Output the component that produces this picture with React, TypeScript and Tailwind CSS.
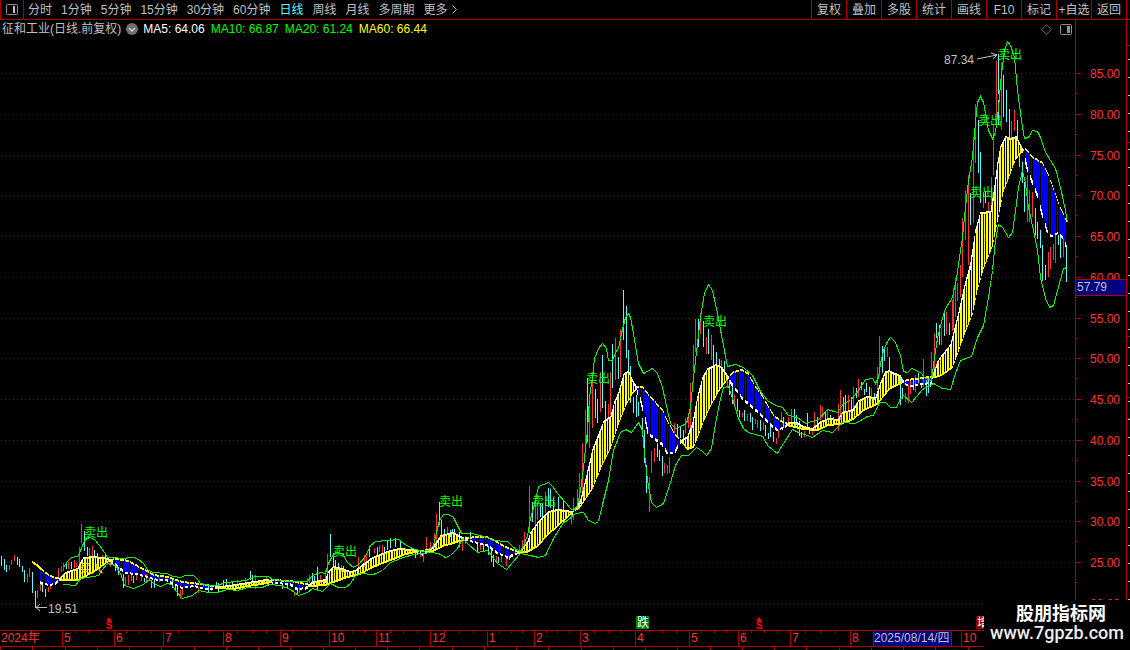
type Point = [number, number]

const parse = (data: string): Point[] =>
  data
    .trim()
    .split(/\s+/)
    .map((pair) => pair.split(',').map(Number) as Point)

const upperBand = parse(`
63,567 67,561 71,557 77,556 79,553 82,545 85,539 89,537 94,539 99,545 104,552 107,557 115,557 120,558 133,557 138,559 143,563 147,569 152,572 167,573 172,576 180,577 185,575 193,575 197,579 200,583 208,585 217,585 225,582 237,581 245,580 255,576 268,576 272,579 280,580 290,581
307,581 312,575 320,572 325,573 328,563 331,557 335,552 342,553 347,562 353,567 358,564 365,556 370,545 375,541 398,539 403,543 412,548 422,551 428,550 433,545 436,532 439,520 443,514 448,514 453,517 457,525 461,533 472,533 487,537 492,540 507,541 513,547 520,551 523,545 527,535 530,518 535,500 538,486 548,482 552,486 557,493 565,502
570,508 573,510 577,505 580,490 583,467 587,430 589,397 592,377 594,358 598,348 602,343 606,348 608,360 612,360 615,352 618,348 621,333 625,317 628,313 630,317 633,333 638,363 643,373 652,368 657,373 662,387 667,410 670,423 675,428 682,425 686,423 690,407 693,377 697,343 700,317 704,293 708,284 712,290 717,313 722,340 727,366 735,364 743,367 752,375
760,391 767,400 775,405 782,407 788,415 797,417 805,423 818,419 827,409 837,412 843,403 850,400 858,390 865,379 872,378 875,383 878,377 880,363 883,350 887,341 890,337 895,342 900,355 903,371 907,372 911,368 920,372 925,378 931,380 934,357 937,338 940,325 945,308 952,297 956,278 959,257 962,237 965,207 968,180
972,157 975,122 977,102 980,96 983,102 985,113 988,130 992,138 995,132 998,107 1001,73 1004,50 1007,41 1010,45 1014,57 1017,90 1021,120 1024,138 1028,137 1032,130 1037,131 1040,137 1045,152 1055,168 1060,187 1065,210 1067,222`)

const lowerBand = parse(`
63,584 75,585 80,578 87,577 98,575 102,569 107,563 115,565 120,573 124,585 133,588 143,584 149,579 153,583 160,586 167,583 171,584 175,590 182,598 192,595 198,590 208,592 217,592 227,589 237,590 247,587 262,587 268,584 280,585 290,589
298,595 307,592 312,588 322,591 330,583 338,587 345,587 350,583 355,575 360,573 373,574 382,570 390,562 400,558 413,554 430,552 438,553 445,557 450,555 457,548 462,538 467,543 477,552 487,550 491,555 497,563 506,569 512,562 520,553 530,555 538,557 545,555 553,538 563,522
567,520 575,513 583,512 588,520 595,523 598,521 603,500 608,480 613,450 620,432 625,429 631,432 638,422 642,430 644,453 647,480 651,502 656,507 663,503 670,482 675,465 681,455 688,455 696,447 702,451 706,455 711,448 715,423 720,398 723,387 728,386 732,398 738,418 743,428 748,432
762,436 768,446 777,453 783,443 792,429 798,432 807,435 812,437 822,430 832,432 842,422 855,423 867,416 873,415 879,402 885,402 890,407 896,407 900,398 903,395 911,402 922,389 933,383 942,388 950,389
955,373 960,360 971,356 977,337 983,325 988,297 992,270 995,240 998,224 1002,227 1008,237 1012,232 1015,210 1018,187 1022,170 1025,183 1028,207 1033,230 1037,250 1040,277 1045,298 1049,307 1053,305 1057,290 1063,268 1067,267`)

const fastLine = parse(`
39,580 43,583 50,584 55,582 60,578 65,573 77,569 80,563 83,558 93,557 108,559 115,563 125,572 137,573 147,576 157,579 167,579 173,583 182,587 193,585 207,588 218,587 230,586 247,583 267,580 273,582 290,583
297,588 305,587 313,582 325,580 328,572 333,567 342,569 350,572 355,571 362,565 372,558 387,552 398,549 412,550 422,553 433,547 440,536 453,533 462,538 473,541 487,544 497,552 507,556 513,553 520,552 527,542 530,533 538,522 548,512 557,510 567,511
573,513 580,500 585,480 592,450 603,422 610,417 614,402 618,393 623,375 628,371 632,380 636,387 640,397 644,412 648,432 655,438 662,443 667,452 673,452 679,442 687,437 692,423 697,397 702,378 707,369 715,365 722,368 728,377 733,385 742,397
760,413 770,423 777,429 782,427 788,423 797,423 803,427 812,429 820,422 828,419 837,420 842,413 852,410 858,401 867,397 875,398 880,383 885,372 889,371 895,374 900,376 904,383 910,385 922,383 930,382 933,373 937,362 942,355 950,345
953,333 958,313 963,290 970,263 975,230 980,213 990,212 993,193 997,163 1000,147 1005,137 1010,139 1016,137 1020,145 1024,153 1027,167 1033,183 1038,196 1042,213 1047,230 1051,235 1058,232 1063,237 1066,245`)

const slowLine = parse(`
32,562 37,565 42,570 48,575 55,578 63,579 78,579 87,574 97,568 108,560 117,559 128,561 137,566 147,571 153,575 167,577 182,582 200,584 218,587 233,588 247,585 267,582 272,580 290,581
300,583 310,585 325,584 333,581 347,576 360,573 370,567 382,562 393,558 405,553 415,551 433,550 442,545 453,542 465,538 477,537 487,537 495,541 507,548 518,552 527,551 537,545 548,533 557,525 568,515
573,511 580,505 592,487 602,463 610,447 618,423 625,405 632,392 637,387 642,387 650,397 662,410 668,423 675,435 682,442 687,448 693,446 698,434 703,420 710,405 718,390 727,378 733,372 742,370 748,374 755,387
760,393 767,405 773,415 780,421 790,425 803,428 817,429 827,424 840,423 853,418 863,409 877,403 883,395 890,387 900,382 907,380 922,378 935,376 943,373 952,366 958,350 965,330 972,313 977,288 983,267 992,245 997,220 1000,205
1003,190 1008,177 1015,158 1020,152 1025,149 1032,157 1042,163 1048,175 1057,200 1060,208 1067,223`)

// Each bar is "x,high,low"
const risingBars = `
9,565,570 11,560,565 14,555,561 27,574,582 29,568,577 37,590,598 40,582,591 48,587,592 50,583,589 58,568,577 61,566,572 63,563,571 68,562,569 74,560,568 76,563,567 79,547,565 81,524,543 89,548,557 92,546,556 102,555,560 110,562,567 125,577,584 128,575,585 131,573,581 136,575,580 141,576,581 146,574,581 149,576,581 159,578,582 180,590,599 182,589,595 198,587,593 211,586,591 229,582,586 237,580,584 245,578,584 255,575,589 266,577,583
294,592,596 299,587,593 307,578,585 309,575,583 320,575,583 325,570,581 327,554,583 341,565,572 358,557,570 364,555,567 366,553,562 374,548,553 379,545,552 382,545,555 405,548,555 408,550,557 420,550,557 423,550,562 426,537,550 430,542,549 434,533,548 436,514,547 447,527,535 462,537,551 465,536,544 480,541,550 496,556,563 501,555,562 506,555,566 515,548,555 519,545,553 522,540,550 524,532,547 529,486,533 535,495,528 537,502,520 545,492,513 571,512,524
573,498,520 577,489,510 579,473,510 582,443,497 585,410,450 589,397,448 592,372,428 600,372,412 608,404,420 610,372,415 615,338,380 620,329,377 649,477,512 651,451,473 654,448,462 664,463,473 667,465,474 669,457,473 674,423,450 685,418,433 688,413,428 690,383,428 693,345,372 695,319,352 700,313,334 706,337,354 711,335,360 721,360,370 727,375,388 734,395,404
742,413,417 747,414,421 755,419,424 757,420,428 763,422,430 776,438,444 778,428,438 781,412,423 788,417,427 791,409,423 804,431,437 812,428,435 814,412,430 820,405,420 822,407,418 827,409,419 838,404,431 840,390,420 848,395,412 853,387,408 858,379,397 871,388,397 877,367,390 879,336,375 887,347,357 905,393,402 908,383,403 910,380,394 915,375,392 923,359,387 931,352,380 934,333,375 941,328,345 946,312,334 952,300,331
953,288,330 955,278,317 957,283,301 960,265,297 962,218,277 965,190,240 968,175,265 973,137,223 975,104,163 983,192,208 988,202,212 991,177,212 993,125,175 996,61,125 1001,63,130 1011,121,140 1014,110,131 1027,175,222 1029,190,222 1032,192,217 1048,252,277 1050,247,269 1053,244,260 1055,235,263 1063,238,257`

const fallingBars = `
1,556,566 4,559,570 6,565,572 17,557,565 19,559,567 22,566,572 24,570,582 32,572,593 35,591,608 42,583,592 45,589,597 66,562,569 71,562,569 84,531,551 87,547,556 94,550,557 97,553,560 105,555,561 115,563,571 118,567,575 123,574,588 133,576,583 144,578,582 151,580,588 154,578,588 172,580,588 175,583,591 177,587,596 193,583,587 208,585,592 216,582,588 218,583,592 223,580,586 226,579,585 232,581,588 250,571,580 252,575,583 263,579,584 268,580,586 282,580,589 287,580,588
297,588,594 312,573,582 314,576,583 317,567,590 330,534,557 333,553,568 335,560,570 338,563,570 343,566,572 369,547,557 377,547,556 384,547,552 387,540,550 390,538,548 395,538,547 400,540,548 415,550,558 439,502,525 441,520,536 444,529,537 450,530,537 452,529,534 454,529,534 459,532,547 470,532,542 477,543,552 483,542,552 488,545,555 491,550,562 493,555,567 498,557,563 509,553,560 532,502,522 540,503,517 542,503,518 548,488,507 550,489,508 553,498,510 558,497,510 563,500,512
587,378,442 595,389,418 597,399,423 602,355,408 605,401,420 612,344,388 618,357,379 623,290,340 626,306,358 628,350,377 630,366,403 633,397,413 636,395,417 638,402,416 642,418,437 644,430,463 646,465,493 657,443,457 659,450,461 662,456,476 677,424,437 680,426,438 683,430,440 698,319,347 703,321,347 708,329,354 713,345,367 716,352,367 719,359,368 724,361,378 729,380,395 732,385,404 737,399,411 739,410,417
744,410,421 750,413,422 752,417,430 760,420,431 765,425,436 768,433,439 770,425,437 773,432,442 783,417,428 794,409,423 796,415,425 799,421,436 801,432,438 807,413,428 809,427,434 817,417,424 825,412,420 830,415,420 833,417,425 843,397,412 845,395,411 851,397,412 856,388,398 861,382,390 864,389,395 866,383,392 869,387,397 874,393,400 882,346,373 884,347,361 889,357,372 900,375,405 902,388,399 913,380,390 918,373,383 921,377,388 926,380,396 928,378,393 936,323,338 939,325,345 944,310,336 949,323,335
970,193,225 978,120,173 980,152,203 985,192,203 998,54,94 998,100,124 1003,75,117 1006,90,122 1009,109,140 1017,120,138 1019,153,167 1022,162,183 1024,182,212 1035,208,235 1037,222,239 1040,230,248 1042,245,281 1045,265,280 1058,235,245 1060,235,258 1066,245,282`

const sellSignals: Point[] = [
  [84, 537], [333, 556], [439, 506], [532, 506], [586, 383], [703, 326], [970, 197], [978, 125], [998, 59],
]

const valueAt = (line: Point[], x: number) => {
  const i = line.findIndex((p) => p[0] >= x)
  if (i <= 0) return line[i === 0 ? 0 : line.length - 1][1]
  const [x0, y0] = line[i - 1]
  const [x1, y1] = line[i]
  return x1 === x0 ? y1 : y0 + ((y1 - y0) * (x - x0)) / (x1 - x0)
}

const toPath = (line: Point[]) => 'M' + line.map(([x, y]) => `${x + 0.5} ${y + 0.5}`).join('L')

const barPath = (bars: string) =>
  bars
    .trim()
    .split(/\s+/)
    .map((bar) => {
      const [x, high, low] = bar.split(',').map(Number)
      return `M${x + 0.5} ${high}V${low}`
    })
    .join('')

// Vertical hatching between the two averages, split by trend.
// The edges follow the averages: solid caps while rising, dashes while falling.
const BAR_PITCH = 2.6
const hatch = { up: '', down: '', white: '', yellow: '' }
const gaps = new Set(Array.from({ length: 420 }, (_, i) => Math.round(i * BAR_PITCH)))
for (let x = 39; x <= 1066; x++) {
  const fast = Math.round(valueAt(fastLine, x))
  const slow = Math.round(valueAt(slowLine, x))
  const rising = fast <= slow
  const step = Math.round(Math.abs(valueAt(fastLine, x + 1) - valueAt(fastLine, x)))
  if (!gaps.has(x)) {
    hatch[rising ? 'up' : 'down'] += `M${x + 0.5} ${Math.min(fast, slow)}V${Math.max(fast, slow) + 1}`
  }
  if (rising) {
    hatch.white += `M${x + 0.5} ${fast - 1}v${1 + step}`
    hatch.yellow += `M${x + 0.5} ${fast}v1M${x + 0.5} ${slow}v2`
  } else {
    if (x % 5 < 3) hatch.white += `M${x + 0.5} ${fast}v${2 + step}`
    if (x % 5 < 4) hatch.yellow += `M${x + 0.5} ${slow - 1}v2`
  }
}

const prices = Array.from({ length: 14 }, (_, i) => ({
  label: (85 - i * 5).toFixed(2),
  y: Math.round(73 + i * 40.77),
}))

const periods = ['分时', '1分钟', '5分钟', '15分钟', '30分钟', '60分钟', '日线', '周线', '月线', '多周期']
const tools = ['复权', '叠加', '多股', '统计', '画线', 'F10', '标记', '+自选', '返回']

const averages = [
  { text: 'MA5: 64.06', color: 'text-white' },
  { text: 'MA10: 66.87', color: 'text-[#00ff00]' },
  { text: 'MA20: 61.24', color: 'text-[#00ff00]' },
  { text: 'MA60: 66.44', color: 'text-[#ffff00]' },
]

const months = [
  { label: '2024年', span: 62 },
  { label: '5', span: 52 },
  { label: '6', span: 49 },
  { label: '7', span: 60 },
  { label: '8', span: 57 },
  { label: '9', span: 49 },
  { label: '10', span: 47 },
  { label: '11', span: 54 },
  { label: '12', span: 57 },
  { label: '1', span: 47 },
  { label: '2', span: 46 },
  { label: '3', span: 55 },
  { label: '4', span: 54 },
  { label: '5', span: 49 },
  { label: '6', span: 52 },
  { label: '7', span: 60 },
  { label: '8', span: 23 },
  { label: '2025/08/14/四', span: 78, active: true },
  { label: '', span: 10 },
  { label: '10', span: 169 },
]
const totalSpan = months.reduce((sum, { span }) => sum + span, 0)

const Toolbar = () => (
  <header className="flex h-5 items-stretch border-b border-[#b00000] pr-[3px]">
    <button aria-label="切换侧栏" className="flex w-6 items-center justify-center border-x border-[#b00000]">
      <PanelIcon side="left" />
    </button>
    <nav className="ml-1 flex flex-1 items-center gap-[9px] whitespace-nowrap">
      {periods.map((period) => (
        <button key={period} className={period === '日线' ? 'text-[#54fcfc]' : ''}>
          {period}
        </button>
      ))}
      <button className="flex items-center gap-1">
        更多
        <svg width="5" height="9" viewBox="0 0 5 9" fill="none" stroke="currentColor">
          <path d="M0.5 0.5L4.5 4.5L0.5 8.5" />
        </svg>
      </button>
    </nav>
    <div className="flex border-r border-[#b00000]">
      {tools.map((tool) => (
        <button key={tool} className="w-[35px] whitespace-nowrap border-l border-[#b00000]">
          {tool}
        </button>
      ))}
    </div>
  </header>
)

const PanelIcon = ({ side }: { side: 'left' | 'right' }) => (
  <svg width="12" height="11" viewBox="0 0 12 11" className="text-[#909090]">
    <rect x="0.5" y="0.5" width="11" height="10" rx="1" fill="none" stroke="currentColor" />
    <rect x="7" y="2" width={side === 'left' ? 2 : 3} height="7" fill={side === 'left' ? '#c0c0c0' : 'currentColor'} />
  </svg>
)

const Legend = () => (
  <div className="flex h-5 pr-[3px]">
    <div className="flex flex-1 items-center whitespace-nowrap border-r border-[#b00000] pb-[2px] pl-[2px] pr-[3px]">
      <h1>征和工业(日线.前复权)</h1>
      <button aria-label="展开" className="mx-1 p-px">
        <svg width="12" height="12" viewBox="0 0 12 12">
          <circle cx="6" cy="6" r="6" fill="#707070" />
          <path d="M3 5L6 8L9 5" fill="none" stroke="#d0d0d0" strokeWidth="1.5" />
        </svg>
      </button>
      <div className="flex flex-1 gap-[6px]">
        {averages.map(({ text, color }) => (
          <span key={text} className={color}>
            {text}
          </span>
        ))}
      </div>
      <div className="flex items-center gap-2">
        <svg width="11" height="11" viewBox="0 0 11 11" fill="none" stroke="#707070">
          <path d="M5.5 0.7L10.3 5.5L5.5 10.3L0.7 5.5Z" />
        </svg>
        <PanelIcon side="right" />
      </div>
    </div>
    <div className="w-[51px] border-r border-[#b00000]" />
  </div>
)

const DividendMark = ({ x }: { x: number }) => (
  <g fill="#ff0000">
    <path d={`M${x} 617l3 4h-6z`} />
    <text x={x} y={629} textAnchor="middle" className="text-[10px] font-bold">
      S
    </text>
  </g>
)

const Chart = () => (
  <svg viewBox="0 40 1130 590" className="block h-auto w-full text-[12px]" role="img" aria-label="日线图">
    <g shapeRendering="crispEdges" fill="none">
      {prices.map(({ label, y }) => (
        <path key={label} d={`M1 ${y + 0.5}H1075`} stroke="#a00000" strokeDasharray="1 3" />
      ))}
      <path d={barPath(risingBars)} stroke="#ff3232" />
      <path d={barPath(fallingBars)} stroke="#54fcfc" />
      <path d={hatch.up} stroke="#ffff00" />
      <path d={hatch.down} stroke="#0000ff" />
      <path d={hatch.yellow} stroke="#ffff00" />
      <path d={hatch.white} stroke="#ffffff" />
      <path d="M32 562L37 565L42 570" stroke="#ffff00" strokeWidth="2" />
      <path d={toPath(upperBand)} stroke="#00ff00" />
      <path d={toPath(lowerBand)} stroke="#00ff00" />
    </g>

    <g fill="#00ff00">
      {sellSignals.map(([x, y]) => (
        <text key={x} x={x} y={y}>
          卖出
        </text>
      ))}
    </g>
    <text x="79" y="573" fill="#ffff00">
      买入
    </text>

    {/* Extremes */}
    <g fill="#c0c0c0">
      <text x="48" y="613">19.51</text>
      <text x="944" y="64">87.34</text>
      <path d="M47 607.5H36M40 604L36 607.5L40 611M977 59L997 55M991 53L997 55L993 59" fill="none" stroke="#c0c0c0" />
    </g>

    {/* Event markers */}
    <DividendMark x={109} />
    <DividendMark x={759} />
    <rect x="636" y="616" width="13" height="13" fill="#008000" />
    <text x="637" y="627" fill="#ffffff">跌</text>
    <rect x="976" y="616" width="13" height="13" fill="#900000" />
    <text x="977" y="627" fill="#ffffff">增</text>

    {/* Price axis */}
    <g shapeRendering="crispEdges" stroke="#b00000">
      <path d="M1075.5 40V630M1126.5 40V630" />
      {prices.map(({ label, y }) => (
        <path key={label} d={`M1076 ${y + 0.5}h5M1076 ${y + 20.5}h2`} />
      ))}
      <path d="M1127 45.5h3M1127 142.5h3M1127 239.5h3M1127 336.5h3M1127 397.5h3M1127 418.5h3M1127 437.5h3" />
      <path d="M1129 59V600" stroke="#c0c0c0" strokeWidth="2" strokeDasharray="1 17" />
    </g>
    <g fill="#ff3232">
      {prices.map(({ label, y }) => (
        <text key={label} x="1120" y={y + 5} textAnchor="end">
          {label}
        </text>
      ))}
    </g>
    <rect x="1075.5" y="279.5" width="51" height="16" fill="#000080" stroke="#b00000" shapeRendering="crispEdges" />
    <text x="1077" y="291" fill="#c0c0c0">57.79</text>
  </svg>
)

const TimeAxis = () => (
  <footer>
    <div className="flex h-[17px] border-y border-[#b00000] text-[#ff3232]">
      {months.map(({ label, span, active }, index) => (
        <div
          key={index}
          className={`relative shrink-0 whitespace-nowrap border-[#b00000] leading-[15px] ${index ? 'border-l' : ''} ${active ? 'bg-[#000080] text-[#c0c0c0]' : 'pl-px'}`}
          style={{ width: `${(span / totalSpan) * 100}%` }}
        >
          {label}
          {span > 40 && index > 0 && !active && (
            <div className="absolute inset-x-0 top-0 flex justify-evenly">
              <i className="h-[2px] w-px bg-[#b00000]" />
              <i className="h-[2px] w-px bg-[#b00000]" />
              <i className="h-[2px] w-px bg-[#b00000]" />
            </div>
          )}
        </div>
      ))}
    </div>
    <div className="flex h-[3px] justify-between">
      {Array.from({ length: 36 }, (_, i) => (
        <i key={i} className="w-px bg-[#b00000]" />
      ))}
    </div>
  </footer>
)

const App = () => {
  return (
    <div className="relative min-h-screen overflow-hidden bg-black font-['Liberation_Sans','Noto_Sans_CJK_SC',sans-serif] text-[12px] leading-4 text-[#c0c0c0]">
      <Toolbar />
      <Legend />
      <Chart />
      <TimeAxis />

      {/* Site badge */}
      <div className="absolute bottom-0 right-0 flex h-[50px] w-[146px] flex-col items-center bg-black pt-1 text-white">
        <span className="pl-2 text-[18px] font-bold leading-5">股朋指标网</span>
        <a href="#" className="font-['Roboto',sans-serif] text-[18px] font-medium leading-[18px] text-[#eeeeee]">
          www.7gpzb.com
        </a>
      </div>
    </div>
  )
}

export default App
